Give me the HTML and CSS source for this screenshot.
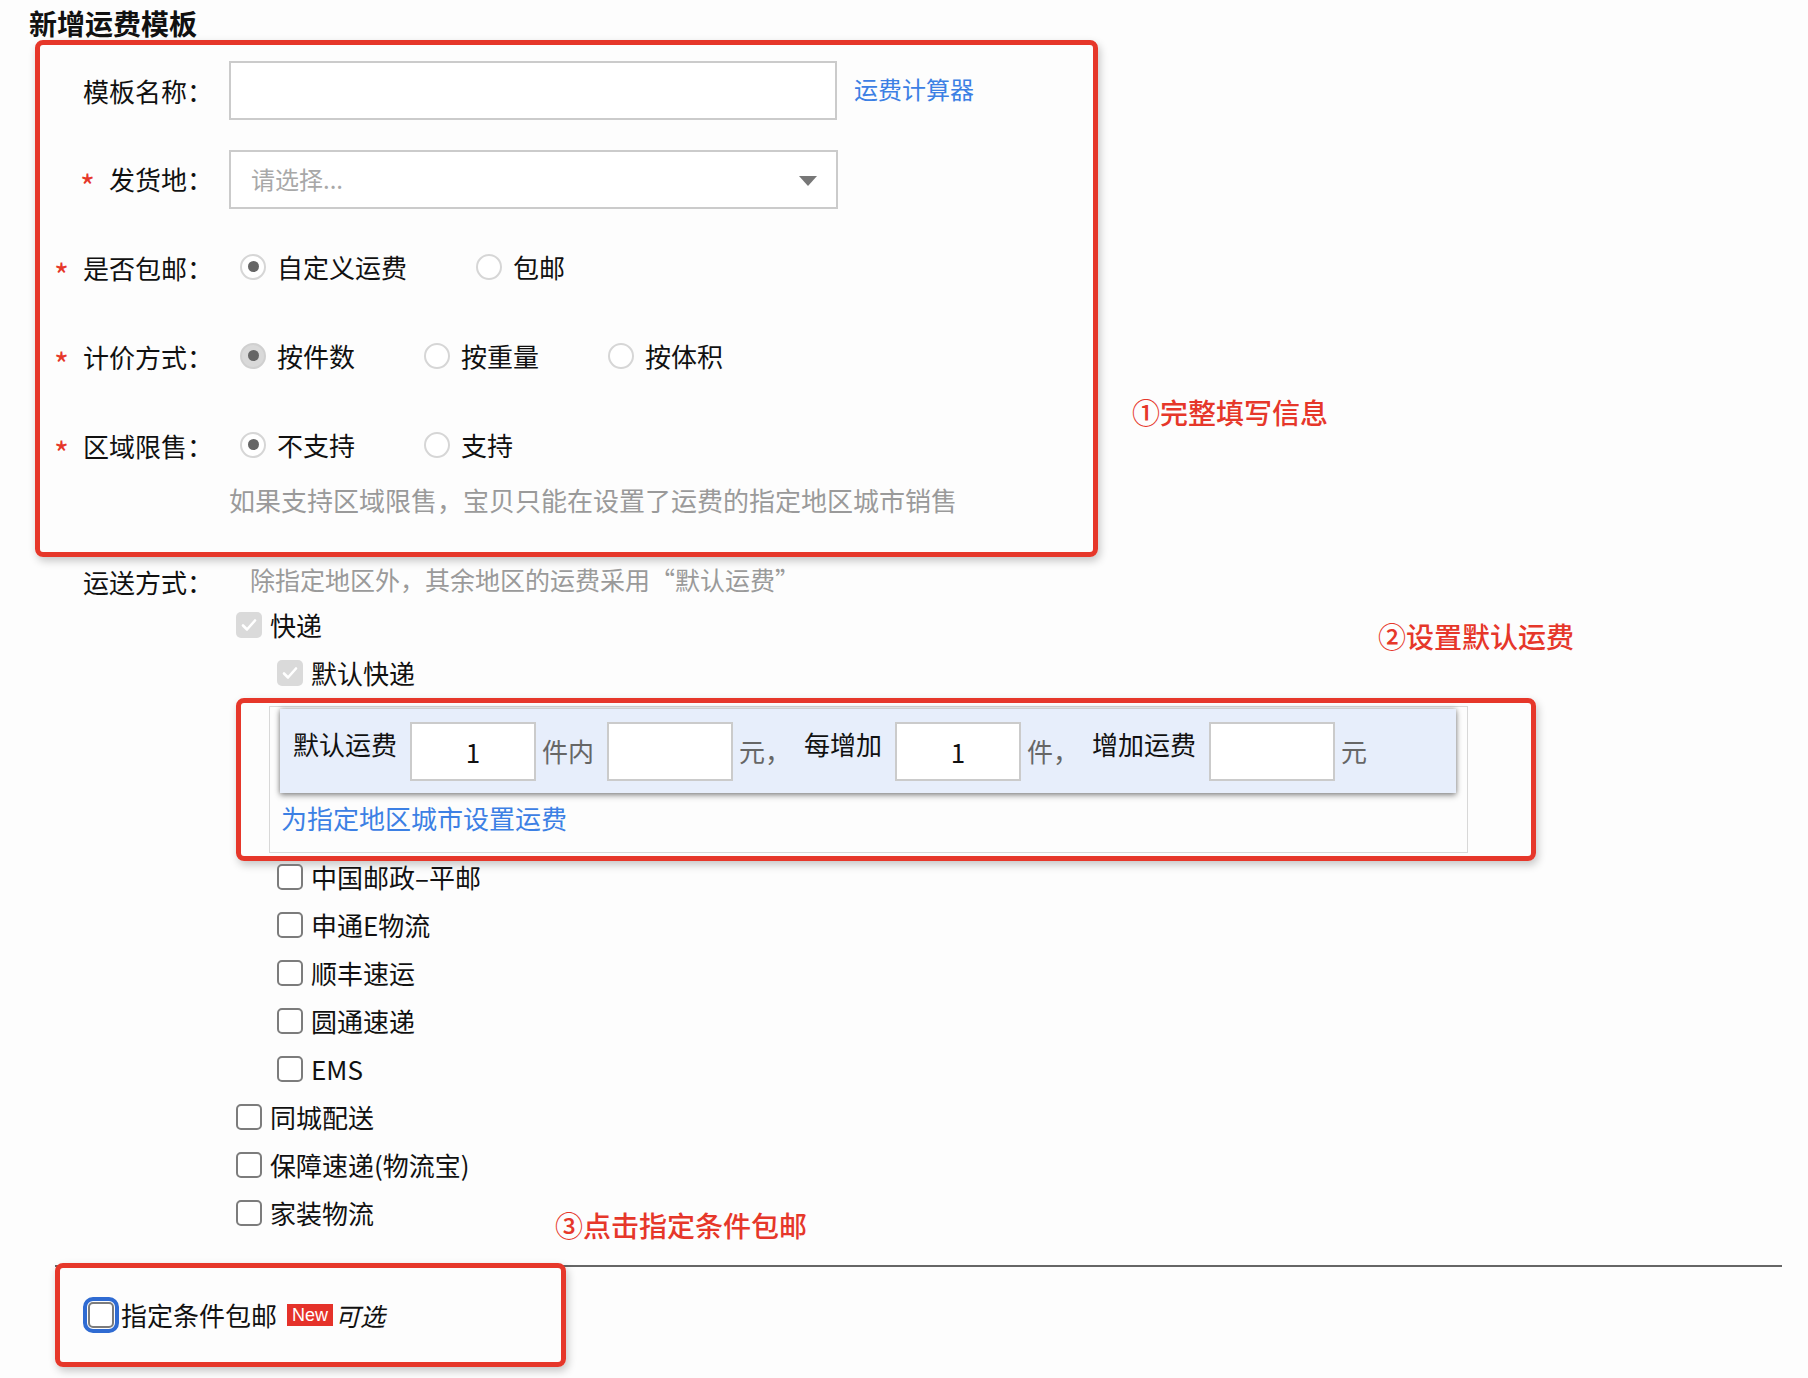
FILE: index.html
```html
<!DOCTYPE html>
<html lang="zh-CN">

<head>
    <meta charset="UTF-8">
    <title>新增运费模板</title>
    <link rel="stylesheet" href="styles.css">
</head>

<body>
    <div class="page">
        <h1 class="page-title">新增运费模板</h1>

        <!-- ① basic info -->
        <div class="mark mark-basic">
            <div class="form-row">
                <div class="form-label">模板名称：</div>
                <div class="form-field">
                    <div class="text-input text-input-wide"></div>
                    <a class="link calc-link">运费计算器</a>
                </div>
            </div>

            <div class="form-row">
                <div class="form-label"><span class="required">*</span>发货地：</div>
                <div class="form-field">
                    <div class="select">
                        <span class="select-placeholder">请选择...</span>
                        <span class="select-arrow"></span>
                    </div>
                </div>
            </div>

            <div class="form-row">
                <div class="form-label"><span class="required">*</span>是否包邮：</div>
                <div class="form-field">
                    <label class="radio-option"><span class="radio checked"></span>自定义运费</label>
                    <label class="radio-option"><span class="radio"></span>包邮</label>
                </div>
            </div>

            <div class="form-row">
                <div class="form-label"><span class="required">*</span>计价方式：</div>
                <div class="form-field">
                    <label class="radio-option"><span class="radio checked disabled"></span>按件数</label>
                    <label class="radio-option"><span class="radio"></span>按重量</label>
                    <label class="radio-option"><span class="radio"></span>按体积</label>
                </div>
            </div>

            <div class="form-row form-row-last">
                <div class="form-label"><span class="required">*</span>区域限售：</div>
                <div class="form-field">
                    <label class="radio-option"><span class="radio checked"></span>不支持</label>
                    <label class="radio-option"><span class="radio"></span>支持</label>
                </div>
            </div>

            <p class="hint">如果支持区域限售，宝贝只能在设置了运费的指定地区城市销售</p>
        </div>

        <!-- shipping methods -->
        <div class="ship">
            <div class="ship-head">
                <div class="form-label">运送方式：</div>
                <div class="ship-note">除指定地区外，其余地区的运费采用“默认运费”</div>
            </div>

            <div class="ship-body">
                <label class="check-row"><span class="check checked-disabled"></span>快递</label>
                <label class="check-row sub"><span class="check checked-disabled"></span>默认快递</label>

                <!-- ② default fee -->
                <div class="mark mark-fee">
                    <div class="fee-panel">
                        <div class="fee-bar">
                            <span class="fee-label">默认运费</span>
                            <span class="fee-input">1</span>
                            <span class="fee-unit">件内</span>
                            <span class="fee-input"></span>
                            <span class="fee-unit">元，</span>
                            <span class="fee-label">每增加</span>
                            <span class="fee-input">1</span>
                            <span class="fee-unit">件，</span>
                            <span class="fee-label">增加运费</span>
                            <span class="fee-input"></span>
                            <span class="fee-unit">元</span>
                        </div>
                        <a class="link area-link">为指定地区城市设置运费</a>
                    </div>
                </div>

                <label class="check-row sub"><span class="check"></span>中国邮政–平邮</label>
                <label class="check-row sub"><span class="check"></span>申通E物流</label>
                <label class="check-row sub"><span class="check"></span>顺丰速运</label>
                <label class="check-row sub"><span class="check"></span>圆通速递</label>
                <label class="check-row sub"><span class="check"></span>EMS</label>
                <label class="check-row"><span class="check"></span>同城配送</label>
                <label class="check-row"><span class="check"></span>保障速递(物流宝)</label>
                <label class="check-row"><span class="check"></span>家装物流</label>
            </div>
        </div>

        <!-- ③ conditional free shipping -->
        <div class="condition">
            <div class="mark mark-cond">
                <span class="check focused"></span>
                <span class="cond-text">指定条件包邮</span>
                <span class="badge-new">New</span>
                <span class="cond-optional">可选</span>
            </div>
        </div>

        <div class="tip tip-1">①完整填写信息</div>
        <div class="tip tip-2">②设置默认运费</div>
        <div class="tip tip-3">③点击指定条件包邮</div>
    </div>
</body>

</html>
```

FILE: styles.css
```css
:root {
    --mark-red: #e6372a;
    --link: #3c80e4;
    --muted: #9a9a9a;
    --input-border: #cbcbcb;
    --label-width: 189px;
}

* {
    margin: 0;
    padding: 0;
    box-sizing: border-box;
}

body {
    font-family: "Noto Sans CJK SC", "Noto Sans", sans-serif;
    font-size: 26px;
    line-height: 1.2;
    color: #111;
    background-color: #fdfdfd;
}

.page {
    position: relative;
    width: 1808px;
    height: 1378px;
    overflow: hidden;
}

.page-title {
    height: 40px;
    padding: 7px 0 0 29px;
    font-size: 28px;
    font-weight: 700;
    line-height: 32px;
}

/* red annotation frames */
.mark {
    border: 5px solid var(--mark-red);
    border-radius: 8px;
    box-shadow: 2px 4px 8px rgba(0, 0, 0, 0.22);
}

.mark-basic {
    margin-left: 35px;
    width: 1063px;
    height: 517px;
    padding-top: 16px;
}

.form-row {
    display: flex;
    align-items: center;
    height: 59px;
    margin-bottom: 30px;
}

.form-row-last {
    margin-bottom: 9px;
}

.form-label {
    flex: none;
    width: var(--label-width);
    padding-right: 16px;
    text-align: right;
    line-height: 30px;
    white-space: nowrap;
}

.required {
    color: var(--mark-red);
    margin-right: 14px;
    font-size: 32px;
    line-height: 20px;
    vertical-align: -9px;
}

.form-field {
    display: flex;
    align-items: center;
    height: 100%;
}

.text-input {
    background: #fff;
    border: 2px solid var(--input-border);
}

.text-input-wide {
    width: 608px;
    height: 59px;
}

.link {
    color: var(--link);
    cursor: pointer;
}

.calc-link {
    margin-left: 17px;
    font-size: 24px;
    margin-top: -2px;
}

.select {
    display: flex;
    align-items: center;
    justify-content: space-between;
    width: 609px;
    height: 59px;
    padding: 0 19px 0 20px;
    background: #fff;
    border: 2px solid var(--input-border);
}

.select-placeholder {
    font-size: 24px;
    color: #a8a8a8;
}

.select-arrow {
    width: 0;
    height: 0;
    border-left: 9px solid transparent;
    border-right: 9px solid transparent;
    border-top: 10px solid #777;
    margin-top: 2px;
}

.radio-option {
    display: flex;
    align-items: center;
    margin-right: 58px;
    line-height: 30px;
    margin-top: -4px;
}

.radio {
    position: relative;
    width: 26px;
    height: 26px;
    margin: 0 11px 0 11px;
    border: 2px solid #d6d6d6;
    border-radius: 50%;
    background: #fff;
}

.radio.checked::after {
    content: "";
    position: absolute;
    left: 50%;
    top: 50%;
    width: 11px;
    height: 11px;
    margin: -5.5px 0 0 -5.5px;
    border-radius: 50%;
    background: #666;
}

.radio.disabled {
    background: #d9d9d9;
    border-color: #d0d0d0;
}

.hint {
    padding-left: var(--label-width);
    line-height: 30px;
    color: var(--muted);
}

/* shipping methods */
.ship {
    margin-left: 40px;
}

.ship-head {
    display: flex;
    align-items: center;
    height: 44px;
}

.ship-head .form-label {
    padding-top: 5px;
}

.ship-note {
    margin-left: 21px;
    font-size: 25px;
    color: var(--muted);
}

.ship-body {
    padding-left: var(--label-width);
}

.check-row {
    display: flex;
    align-items: center;
    height: 48px;
    padding-left: 7px;
}

.check-row.sub {
    padding-left: 48px;
}

.check {
    flex: none;
    width: 26px;
    height: 26px;
    margin-right: 8px;
    border: 2px solid #7c7c7c;
    border-radius: 5px;
    background: #fff;
}

.check.checked-disabled {
    border: none;
    background: #dadada url("data:image/svg+xml,%3Csvg xmlns='http://www.w3.org/2000/svg' viewBox='0 0 26 26'%3E%3Cpath d='M7 13.5l4 4 8-9' fill='none' stroke='%23fff' stroke-width='2.6' stroke-linecap='round' stroke-linejoin='round'/%3E%3C/svg%3E") center / 26px 26px no-repeat;
}

.mark-fee {
    width: 1300px;
    margin: 1px 0 -8px 7px;
    padding: 3px 63px 3px 28px;
    box-shadow: 2px 4px 8px rgba(0, 0, 0, 0.22);
}

.fee-panel {
    height: 147px;
    border: 1px solid #d8d8d8;
    background: #fdfdfd;
}

.fee-bar {
    display: flex;
    align-items: center;
    height: 84px;
    margin: 2px 11px 0 10px;
    padding-left: 13px;
    background: #e7eefb;
    box-shadow: 0 0 5px rgba(0, 0, 0, 0.35), 0 3px 6px rgba(0, 0, 0, 0.3);
}

.fee-label {
    margin-right: 13px;
    margin-bottom: 14px;
    line-height: 30px;
}

.fee-input {
    width: 126px;
    height: 59px;
    line-height: 55px;
    text-align: center;
    background: #fff;
    border: 2px solid var(--input-border);
}

.fee-unit {
    margin: 0 13px 0 6px;
    color: #666;
    line-height: 30px;
}

.area-link {
    display: block;
    margin: 10px 0 0 11px;
    line-height: 30px;
}

/* conditional free shipping */
.condition {
    width: 1727px;
    margin: 28px 0 0 55px;
    border-top: 2px solid #666;
}

.mark-cond {
    display: flex;
    align-items: center;
    width: 511px;
    height: 104px;
    margin-top: -4px;
    padding: 0 0 0 28px;
}

.check.focused {
    margin-right: 7px;
    outline: 4px solid #2f6bd2;
    outline-offset: 1px;
}

.cond-text {
    line-height: 30px;
}

.badge-new {
    margin-left: 10px;
    padding: 0 5px;
    height: 22px;
    font-family: "Liberation Sans", sans-serif;
    font-size: 18px;
    line-height: 22px;
    color: #fff;
    background: #e5322a;
}

.cond-optional {
    margin-left: 2px;
    font-size: 25px;
    font-style: italic;
    line-height: 30px;
}

/* annotation text */
.tip {
    position: absolute;
    font-size: 28px;
    font-weight: 500;
    line-height: 34px;
    color: var(--mark-red);
    white-space: nowrap;
}

.tip-1 {
    left: 1132px;
    top: 395px;
}

.tip-2 {
    left: 1378px;
    top: 619px;
}

.tip-3 {
    left: 555px;
    top: 1208px;
}
```
